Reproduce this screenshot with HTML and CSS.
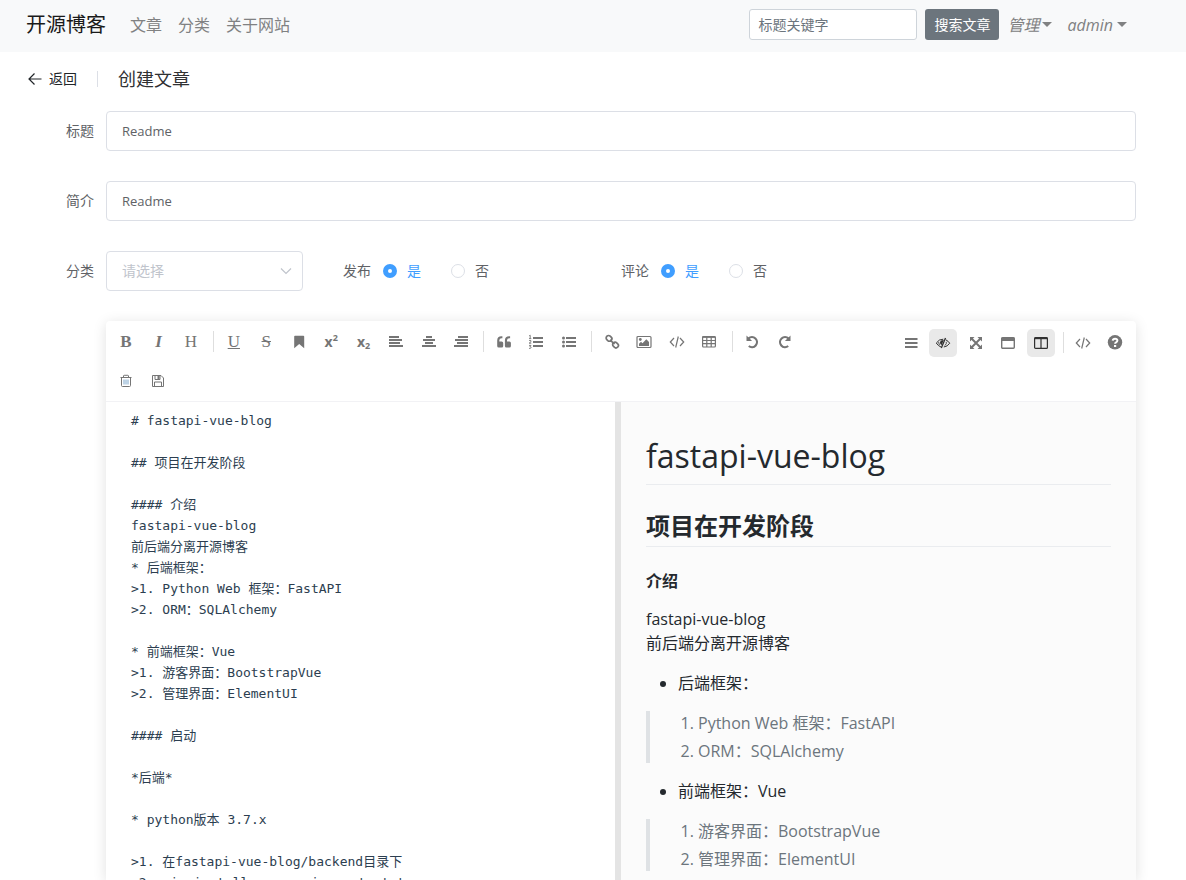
FILE: index.html
```html
<!DOCTYPE html>
<html lang="zh-CN">
<head>
<meta charset="utf-8">
<meta name="viewport" content="width=device-width, initial-scale=1">
<title>创建文章 - 开源博客</title>
<link rel="stylesheet" href="styles.css">
</head>
<body>
<div class="app">
  <header class="navbar">
    <a class="brand" href="#">开源博客</a>
    <nav class="nav">
      <a href="#">文章</a>
      <a href="#">分类</a>
      <a href="#">关于网站</a>
    </nav>
    <form class="search">
      <input class="search-input" type="text" placeholder="标题关键字" aria-label="标题关键字">
      <button class="search-button" type="button">搜索文章</button>
    </form>
    <div class="menus">
      <a class="dropdown" href="#">管理<span class="caret"></span></a>
      <a class="dropdown dropdown-user" href="#">admin<span class="caret"></span></a>
    </div>
  </header>

  <div class="page-header">
    <a class="back" href="#">
      <svg width="14" height="14" viewBox="0 0 14 14" fill="none" stroke="currentColor" stroke-width="1.2"><path d="M13.5 7H1M6.500 1.500L1 7l5.500 5.500"/></svg>
      返回
    </a>
    <h1 class="page-title">创建文章</h1>
  </div>

  <main class="form">
    <div class="field">
      <label class="label" for="title">标题</label>
      <input class="input" id="title" type="text" value="Readme">
    </div>
    <div class="field">
      <label class="label" for="intro">简介</label>
      <input class="input" id="intro" type="text" value="Readme">
    </div>
    <div class="field">
      <label class="label" for="category">分类</label>
      <div class="select-wrap">
        <select class="select" id="category"><option>请选择</option></select>
        <svg class="select-arrow" width="12" height="12" viewBox="0 0 12 12" fill="none" stroke="currentColor" stroke-width="1.200"><path d="M1 3.500l5 5 5-5"/></svg>
      </div>
      <div class="radio-group" role="radiogroup" aria-labelledby="pub">
        <span class="radio-title" id="pub">发布</span>
        <label class="radio"><input type="radio" name="publish" checked><span>是</span></label>
        <label class="radio"><input type="radio" name="publish"><span>否</span></label>
      </div>
      <div class="radio-group" role="radiogroup" aria-labelledby="com">
        <span class="radio-title" id="com">评论</span>
        <label class="radio"><input type="radio" name="comment" checked><span>是</span></label>
        <label class="radio"><input type="radio" name="comment"><span>否</span></label>
      </div>
    </div>

    <section class="editor">
      <div class="toolbar">
        <div class="tools">
          <div class="tool-row">
            <button class="tool serif bold" type="button" title="粗体">B</button>
            <button class="tool serif bold italic" type="button" title="斜体">I</button>
            <button class="tool serif" type="button" title="标题">H</button>
            <span class="sep"></span>
            <button class="tool serif underline" type="button" title="下划线">U</button>
            <button class="tool serif strike" type="button" title="中划线">S</button>
            <button class="tool" type="button" title="标记"><svg viewBox="0 0 16 16"><path fill="currentColor" d="M3.200 2.600q0-.8.8-.8h8.400q.8 0 .8.8V14.200l-5-4.200-5 4.200z"/></svg></button>
            <button class="tool script" type="button" title="上角标">x<sup>2</sup></button>
            <button class="tool script" type="button" title="下角标">x<sub>2</sub></button>
            <button class="tool" type="button" title="居左"><svg viewBox="0 0 16 16"><path fill="currentColor" d="M1 2h10v2H1zM1 5h13v2H1zM1 8h11v2H1zM1 11h14v2H1z"/></svg></button>
            <button class="tool" type="button" title="居中"><svg viewBox="0 0 16 16"><path fill="currentColor" d="M5 2h6v2H5zM2 5h12v2H2zM4 8h8v2H4zM1 11h14v2H1z"/></svg></button>
            <button class="tool" type="button" title="居右"><svg viewBox="0 0 16 16"><path fill="currentColor" d="M5 2h10v2H5zM2 5h13v2H2zM4 8h11v2H4zM1 11h14v2H1z"/></svg></button>
            <span class="sep"></span>
            <button class="tool" type="button" title="段落引用"><svg viewBox="0 0 16 16"><path fill="currentColor" d="M7.200 9v3a1.500 1.500 0 0 1-1.500 1.500H2.700A1.500 1.500 0 0 1 1.200 12V6.500A4.300 4.300 0 0 1 5.500 2.300h.9v2h-.9a2.200 2.200 0 0 0-2.200 2.200v1h2.400A1.500 1.500 0 0 1 7.200 9zM14.900 9v3a1.500 1.500 0 0 1-1.500 1.500h-3A1.500 1.500 0 0 1 8.900 12V6.500a4.300 4.300 0 0 1 4.300-4.200h.9v2h-.9A2.200 2.200 0 0 0 11 6.500v1h2.400A1.500 1.500 0 0 1 14.900 9z"/></svg></button>
            <button class="tool" type="button" title="有序列表"><svg viewBox="0 0 16 16"><path fill="currentColor" d="M5 3h10v2H5zM5 7h10v2H5zM5 11h10v2H5z"/><path fill="none" stroke="currentColor" stroke-width=".9" d="M1.200 1.800l1-.6v3.300M1 4.600h2.300M1.100 6.700q1-.8 1.900 0t-1.900 2.500h2.200M1 11.400h2l-1.100 1.200q1.300 0 1.200 1t-2.100.8"/></svg></button>
            <button class="tool" type="button" title="无序列表"><svg viewBox="0 0 16 16"><path fill="currentColor" d="M5 3h10v2H5zM5 7h10v2H5zM5 11h10v2H5z"/><circle cx="2.500" cy="4" r="1.500" fill="currentColor"/><circle cx="2.500" cy="8" r="1.500" fill="currentColor"/><circle cx="2.500" cy="12" r="1.500" fill="currentColor"/></svg></button>
            <span class="sep"></span>
            <button class="tool" type="button" title="链接"><svg viewBox="0 0 16 16" fill="none" stroke="currentColor" stroke-width="1.700"><rect x="2" y="2" width="6" height="4.800" rx="2.300" transform="rotate(45 5 4.400)"/><rect x="8.500" y="8.600" width="6" height="4.800" rx="2.300" transform="rotate(45 11.500 11)"/><path d="M6 5.800l4.500 4.300"/></svg></button>
            <button class="tool" type="button" title="图片"><svg viewBox="0 0 16 16"><rect x="1" y="2.500" width="14" height="11" rx="1" fill="none" stroke="currentColor" stroke-width="1.200"/><circle cx="4.300" cy="5.500" r="1.400" fill="currentColor"/><path fill="currentColor" d="M3 12V9.800l2-2 1.500 1.500L10.300 5.200 13 8v4z"/></svg></button>
            <button class="tool" type="button" title="代码块"><svg viewBox="0 0 16 16" fill="none" stroke="currentColor" stroke-width="1.200"><path d="M5 4L1.300 8 5 12M11 4l3.700 4L11 12M9.300 2.500l-2.600 11"/></svg></button>
            <button class="tool" type="button" title="表格"><svg viewBox="0 0 16 16" fill="none" stroke="currentColor" stroke-width="1.200"><rect x="1.600" y="2.500" width="12.800" height="10.500" rx="1"/><path stroke-width="1.800" d="M1.600 3h12.800"/><path d="M1.600 6.500h12.800M1.600 9.700h12.800M5.800 3v10M10.200 3v10"/></svg></button>
            <span class="sep"></span>
            <button class="tool" type="button" title="上一步"><svg viewBox="0 0 16 16"><path fill="none" stroke="currentColor" stroke-width="2.200" d="M4.500 4.500A5 5 0 1 1 4.800 12"/><path fill="currentColor" d="M2.500 1.500v5.600h5.600z"/></svg></button>
            <button class="tool" type="button" title="下一步"><svg viewBox="0 0 16 16"><path fill="none" stroke="currentColor" stroke-width="2.200" d="M12.500 4.500A5 5 0 1 0 12.200 12"/><path fill="currentColor" d="M14.500 1.500v5.600H8.900z"/></svg></button>
          </div>
          <div class="tool-row tool-row-extra">
            <button class="tool" type="button" title="清空"><svg viewBox="0 0 16 16" fill="none" stroke="currentColor"><path d="M2.500 4.500h11M5.500 4V3q0-.7.700-.7h3.600q.7 0 .7.700v1M3.500 4.500v8q0 1 1 1h7q1 0 1-1v-8"/><path stroke="#7da7cc" d="M6 6.500v5M8 6.500v5M10 6.500v5"/></svg></button>
            <button class="tool" type="button" title="保存"><svg viewBox="0 0 16 16" fill="none" stroke="currentColor"><path d="M2.500 2.500h8.500l2.500 2.500v8.500h-11zM4.500 13v-4h7v4M5 3v3.500h5V3"/><path fill="currentColor" stroke="none" d="M7.500 3h2v3h-2z"/></svg></button>
          </div>
        </div>
        <div class="tools-right">
          <button class="tool" type="button" title="标题导航"><svg viewBox="0 0 16 16"><path fill="currentColor" d="M2 3h12.500v2H2zM2 7h12.500v2H2zM2 11h12.500v2H2z"/></svg></button>
          <button class="tool active" type="button" title="预览"><svg viewBox="0 0 16 16" fill="none" stroke="currentColor"><path d="M6 12Q3.200 11 1.300 8 4 4 8.300 4.200M10.800 4.800Q13.200 6 14.700 8.200 12.500 11.600 8.800 12"/><path stroke-width="1.300" d="M10.500 3L6.300 13"/><path fill="currentColor" stroke="none" d="M8.800 5L6.500 10.300Q4.700 9 5 7 5.600 4.800 8.800 5z"/><path stroke-width=".8" d="M3.600 7l.8 3M11.300 6.800q.6 2.200-1.500 3.700"/></svg></button>
          <button class="tool" type="button" title="全屏编辑"><svg viewBox="0 0 16 16"><path fill="none" stroke="currentColor" stroke-width="2" d="M3.500 3.500l9 9M12.500 3.500l-9 9"/><path fill="currentColor" d="M2 2h4.500L2 6.500zM14 2v4.500L9.500 2zM2 14V9.500L6.500 14zM14 14H9.500L14 9.500z"/></svg></button>
          <button class="tool" type="button" title="阅读模式"><svg viewBox="0 0 16 16"><rect x="1.700" y="2.700" width="12.600" height="10.600" rx="1" fill="none" stroke="currentColor" stroke-width="1.400"/><path fill="currentColor" d="M1.500 2.500h13v3.500h-13z"/></svg></button>
          <button class="tool active" type="button" title="双栏"><svg viewBox="0 0 16 16" fill="none" stroke="currentColor" stroke-width="1.200"><rect x="1.600" y="2.600" width="12.800" height="10.800" rx="1"/><path d="M8 3v10"/><path stroke-width="2" d="M1.600 3.200h12.800"/></svg></button>
          <span class="sep"></span>
          <button class="tool" type="button" title="查看html文本"><svg viewBox="0 0 16 16" fill="none" stroke="currentColor" stroke-width="1.200"><path d="M5 4L1.300 8 5 12M11 4l3.700 4L11 12M9.300 2.500l-2.600 11"/></svg></button>
          <button class="tool" type="button" title="帮助"><svg viewBox="0 0 16 16"><circle cx="8" cy="7.300" r="7.200" fill="currentColor"/><path fill="none" stroke="#fff" stroke-width="2" d="M5.700 5.700q.3-2 2.400-2t2.300 1.800q0 1.200-1.300 1.800-1 .5-1 1.500"/><path fill="#fff" d="M7 10h2.200v2H7z"/></svg></button>
        </div>
      </div>

      <div class="panes">
        <textarea class="source" aria-label="Markdown" spellcheck="false"># fastapi-vue-blog

## 项目在开发阶段

#### 介绍
fastapi-vue-blog
前后端分离开源博客
* 后端框架：
&gt;1. Python Web 框架：FastAPI
&gt;2. ORM：SQLAlchemy

* 前端框架：Vue
&gt;1. 游客界面：BootstrapVue
&gt;2. 管理界面：ElementUI

#### 启动

*后端*

* python版本 3.7.x

&gt;1. 在fastapi-vue-blog/backend目录下
&gt;2. pip install -r requirements.txt</textarea>
        <article class="preview">
          <h1>fastapi-vue-blog</h1>
          <h2>项目在开发阶段</h2>
          <h4>介绍</h4>
          <p>fastapi-vue-blog<br>前后端分离开源博客</p>
          <ul><li>后端框架：</li></ul>
          <blockquote>
            <ol><li>Python Web 框架：FastAPI</li><li>ORM：SQLAlchemy</li></ol>
          </blockquote>
          <ul><li>前端框架：Vue</li></ul>
          <blockquote>
            <ol><li>游客界面：BootstrapVue</li><li>管理界面：ElementUI</li></ol>
          </blockquote>
        </article>
      </div>
    </section>
  </main>
</div>
</body>
</html>
```

FILE: styles.css
```css
*, *::before, *::after { box-sizing: border-box; }

body {
  margin: 0;
  font-family: "Open Sans", "Noto Sans CJK SC", sans-serif;
  font-size: 16px;
  line-height: 24px;
  color: #212529;
  background: #fff;
}

button, input, select, textarea { font: inherit; margin: 0; }
a { color: inherit; text-decoration: none; }

.app {
  display: flex;
  flex-direction: column;
  height: 100vh;
  overflow: hidden;
}

/* Top navigation */
.navbar {
  display: flex;
  flex: none;
  align-items: center;
  height: 52px;
  padding: 0 59px 3px 26px;
  background: #f8f9fa;
}
.brand { margin-right: 24px; font-size: 20px; color: #1a1a1a; }
.nav { display: flex; gap: 16px; color: #808182; }
.search { display: flex; gap: 8px; margin: 0 8px 0 auto; font-size: 14px; }
.search-input {
  width: 168px;
  height: 31px;
  padding: 0 8px;
  border: 1px solid #ced4da;
  border-radius: 3px;
  background: #fff;
}
.search-input::placeholder { color: #6c757d; opacity: 1; }
.search-button {
  height: 31px;
  padding: 0 9px;
  border: 0;
  border-radius: 3px;
  background: #6c757d;
  color: #fff;
}
.menus { display: flex; gap: 16px; color: #808182; font-style: italic; }
.dropdown { display: flex; align-items: center; gap: 2px; }
.dropdown-user { gap: 4px; }
.caret {
  border: 5px solid transparent;
  border-top-color: currentColor;
  border-bottom: 0;
}

/* Page header */
.page-header {
  display: flex;
  flex: none;
  align-items: center;
  height: 54px;
  padding-left: 28px;
}
.back {
  display: flex;
  align-items: center;
  gap: 7px;
  padding-right: 20px;
  font-size: 14px;
  line-height: 16px;
  border-right: 1px solid #dcdfe6;
}
.page-title { margin: 0 0 0 20px; font-size: 18px; font-weight: 400; color: #303133; }

/* Form */
.form {
  display: flex;
  flex: 1;
  flex-direction: column;
  gap: 30px;
  min-height: 0;
  padding: 5px 50px 0 26px;
  font-size: 14px;
  color: #606266;
}
.field { display: flex; flex: none; align-items: center; height: 40px; }
.label { width: 80px; padding-right: 12px; text-align: right; }
.input, .select {
  height: 40px;
  padding: 0 15px;
  border: 1px solid #dcdfe6;
  border-radius: 4px;
  background: #fff;
  color: #606266;
}
.input { flex: 1; min-width: 0; font-size: 13px; }
.select-wrap { position: relative; width: 197px; margin-right: 40px; }
.select { width: 100%; color: #c0c4cc; appearance: none; }
.select-arrow { position: absolute; top: 14px; right: 11px; color: #c0c4cc; pointer-events: none; }

.radio-group { display: flex; align-items: center; width: 278px; }
.radio-title { margin-right: 12px; }
.radio { display: flex; align-items: center; gap: 10px; margin-right: 30px; }
.radio input {
  appearance: none;
  width: 14px;
  height: 14px;
  border: 1px solid #dcdfe6;
  border-radius: 50%;
  background: #fff;
}
.radio input:checked { border: 5px solid #409eff; }
.radio input:checked + span { color: #409eff; }

/* Markdown editor */
.editor {
  display: flex;
  flex: 1;
  flex-direction: column;
  min-height: 0;
  margin-left: 80px;
  border-radius: 4px 4px 0 0;
  background: #fff;
  box-shadow: 0 2px 14px rgba(0, 0, 0, .12);
}
.toolbar {
  display: flex;
  flex: none;
  justify-content: space-between;
  padding: 0 7px 0 6px;
  border-bottom: 1px solid #f2f2f5;
  font: 16px/40px "Liberation Sans", sans-serif;
  color: #757575;
}
.tool-row { height: 40px; white-space: nowrap; }
.tool-row-extra { line-height: 38px; }
.tools-right { padding-top: 1px; white-space: nowrap; }
.tool {
  display: inline-flex;
  align-items: center;
  justify-content: center;
  width: 28px;
  height: 28px;
  padding: 0;
  border: 0;
  border-radius: 5px;
  background: transparent;
  color: inherit;
  vertical-align: middle;
  line-height: 28px;
}
.tool svg { width: 16px; height: 16px; }
.tool.active { background: #e9e9e9; color: #303030; }
.serif { font-family: "Liberation Serif", serif; font-size: 17px; }
.bold { font-weight: 700; }
.italic { font-style: italic; }
.underline { text-decoration: underline; }
.strike { text-decoration: line-through; }
.script { font-family: "Open Sans", sans-serif; font-size: 14px; font-weight: 700; }
.script sup, .script sub { font-size: 9px; line-height: 9px; }
.script sup { margin-bottom: 8px; }
.script sub { margin-top: 8px; }
.sep {
  display: inline-block;
  width: 1px;
  height: 21px;
  margin: 0 1px 0 4px;
  background: #dedede;
  vertical-align: middle;
}
.tools-right .sep { margin: 0 0 0 4px; }

.panes { display: flex; flex: 1; min-height: 0; }
.source, .preview { flex: 1 1 50%; min-width: 0; overflow: hidden; }
.source {
  padding: 8px 25px 0;
  border: 0;
  border-right: 6px solid #e4e4e4;
  outline: 0;
  resize: none;
  background: #fff;
  color: #2c3e50;
  font: 13px/21px "DejaVu Sans Mono", "Noto Sans CJK SC", monospace;
}
.preview {
  padding: 32px 25px 0;
  background: #fbfbfb;
  color: #24292e;
  font-size: 16px;
}
.preview h1, .preview h2 { margin: 0; border-bottom: 1px solid #eaecef; }
.preview h1 { padding-bottom: 6px; font-size: 32px; line-height: 44px; font-weight: 500; }
.preview h2 { padding: 24px 0 4px; font-size: 24px; line-height: 33px; }
.preview h4 { margin: 24px 0 16px; font-size: 16px; line-height: 20px; }
.preview p, .preview ul, .preview blockquote { margin: 0 0 16px; }
.preview ul, .preview ol { padding-left: 32px; }
.preview ol { margin: 0; }
.preview li + li { margin-top: 4px; }
.preview blockquote { padding: 0 16px; border-left: 4px solid #dfe2e5; color: #6c757d; }
```
